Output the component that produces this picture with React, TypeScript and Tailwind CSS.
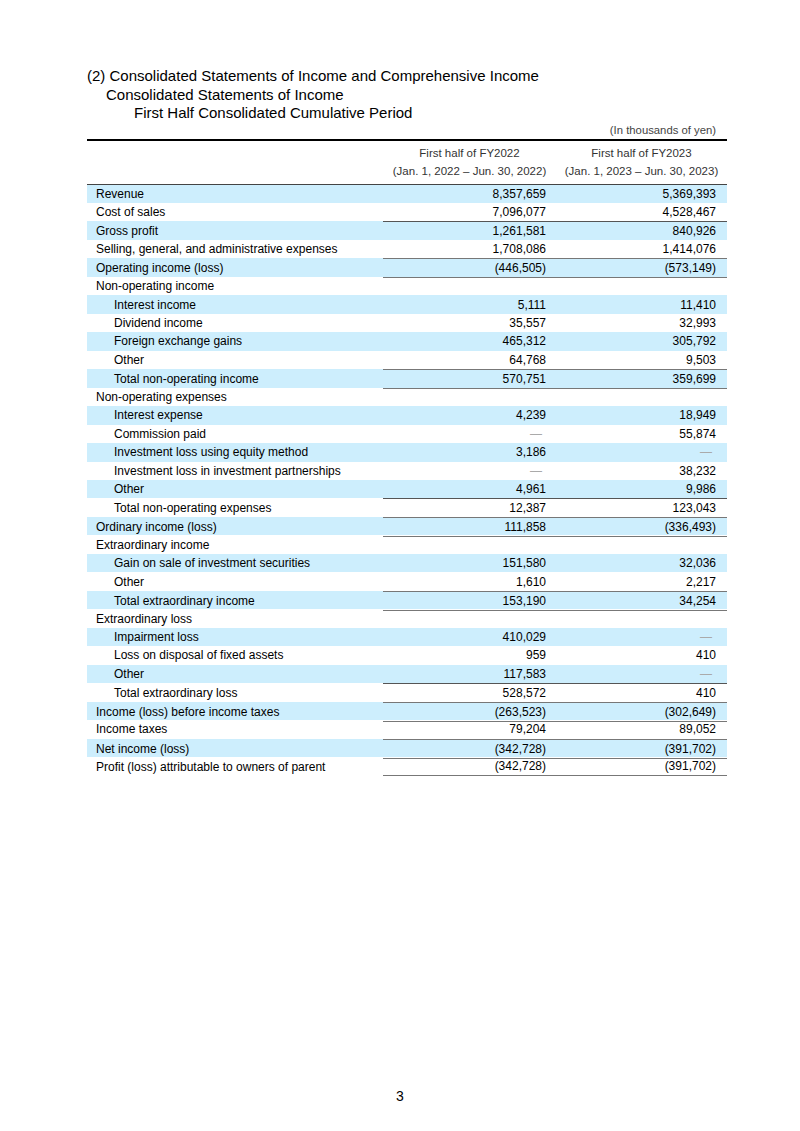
import React from "react";

type Row = {
  label: string;
  a: string;
  b: string;
  indent?: boolean;
  lineTop?: boolean;
  lineBottom?: boolean;
};

const rows: Row[] = [
  { label: "Revenue", a: "8,357,659", b: "5,369,393" },
  { label: "Cost of sales", a: "7,096,077", b: "4,528,467" },
  { label: "Gross profit", a: "1,261,581", b: "840,926", lineTop: true },
  { label: "Selling, general, and administrative expenses", a: "1,708,086", b: "1,414,076" },
  { label: "Operating income (loss)", a: "(446,505)", b: "(573,149)", lineTop: true, lineBottom: true },
  { label: "Non-operating income", a: "", b: "" },
  { label: "Interest income", a: "5,111", b: "11,410", indent: true },
  { label: "Dividend income", a: "35,557", b: "32,993", indent: true },
  { label: "Foreign exchange gains", a: "465,312", b: "305,792", indent: true },
  { label: "Other", a: "64,768", b: "9,503", indent: true },
  { label: "Total non-operating income", a: "570,751", b: "359,699", indent: true, lineTop: true, lineBottom: true },
  { label: "Non-operating expenses", a: "", b: "" },
  { label: "Interest expense", a: "4,239", b: "18,949", indent: true },
  { label: "Commission paid", a: "-", b: "55,874", indent: true },
  { label: "Investment loss using equity method", a: "3,186", b: "-", indent: true },
  { label: "Investment loss in investment partnerships", a: "-", b: "38,232", indent: true },
  { label: "Other", a: "4,961", b: "9,986", indent: true },
  { label: "Total non-operating expenses", a: "12,387", b: "123,043", indent: true, lineTop: true },
  { label: "Ordinary income (loss)", a: "111,858", b: "(336,493)", lineTop: true, lineBottom: true },
  { label: "Extraordinary income", a: "", b: "" },
  { label: "Gain on sale of investment securities", a: "151,580", b: "32,036", indent: true },
  { label: "Other", a: "1,610", b: "2,217", indent: true },
  { label: "Total extraordinary income", a: "153,190", b: "34,254", indent: true, lineTop: true, lineBottom: true },
  { label: "Extraordinary loss", a: "", b: "" },
  { label: "Impairment loss", a: "410,029", b: "-", indent: true },
  { label: "Loss on disposal of fixed assets", a: "959", b: "410", indent: true },
  { label: "Other", a: "117,583", b: "-", indent: true },
  { label: "Total extraordinary loss", a: "528,572", b: "410", indent: true, lineTop: true },
  { label: "Income (loss) before income taxes", a: "(263,523)", b: "(302,649)", lineTop: true, lineBottom: true },
  { label: "Income taxes", a: "79,204", b: "89,052" },
  { label: "Net income (loss)", a: "(342,728)", b: "(391,702)", lineTop: true, lineBottom: true },
  { label: "Profit (loss) attributable to owners of parent", a: "(342,728)", b: "(391,702)", lineBottom: true },
];

function Value({ v, row, last }: { v: string; row: Row; last?: boolean }) {
  return (
    <div
      className={`flex items-center justify-end h-full ${last ? "pr-[11px]" : "pr-[10px]"} ${
        row.lineTop ? "border-t border-[#555]" : ""
      } ${row.lineBottom ? "border-b border-[#777]" : ""}`}
    >
      {v === "-" ? (
        <span className="text-[#aaa] pr-[4px]">―</span>
      ) : (
        <span>{v}</span>
      )}
    </div>
  );
}

export default function App() {
  return (
    <div
      className="w-[800px] h-[1131px] bg-white text-black relative"
      style={{ fontFamily: '"Liberation Sans", Arial, sans-serif' }}
    >
      <div className="pl-[87px] pt-[67px] w-[727px]">
        {/* Title */}
        <div className="text-[15px] leading-[18.5px]">
          <div>(2) Consolidated Statements of Income and Comprehensive Income</div>
          <div className="pl-[19px]">Consolidated Statements of Income</div>
          <div className="pl-[47px]">First Half Consolidated Cumulative Period</div>
        </div>

        <div className="mb-[2px] text-right text-[11.3px] leading-[14px] text-[#444] pr-[11px]">
          (In thousands of yen)
        </div>

        {/* Table */}
        <div className="border-t-2 border-black">
          <div className="grid grid-cols-[296px_173px_171px] h-[44px] border-b border-[#444] text-[11.5px] leading-[18px] text-[#333]">
            <div />
            <div className="flex flex-col items-center justify-center">
              <span>First half of FY2022</span>
              <span>(Jan. 1, 2022 – Jun. 30, 2022)</span>
            </div>
            <div className="flex flex-col items-center justify-center">
              <span>First half of FY2023</span>
              <span>(Jan. 1, 2023 – Jun. 30, 2023)</span>
            </div>
          </div>

          <div className="text-[12px]">
            {rows.map((row, i) => (
              <div
                key={i}
                className={`grid grid-cols-[296px_173px_171px] h-[18.48px] ${
                  i % 2 === 0 ? "bg-[#cdeefd]" : "bg-white"
                }`}
              >
                <div className={`flex items-center ${row.indent ? "pl-[27px]" : "pl-[9px]"}`}>
                  {row.label}
                </div>
                <Value v={row.a} row={row} />
                <Value v={row.b} row={row} last />
              </div>
            ))}
          </div>
        </div>
      </div>

      <div className="absolute left-0 right-0 top-[1086px] text-center text-[14px]">3</div>
    </div>
  );
}
